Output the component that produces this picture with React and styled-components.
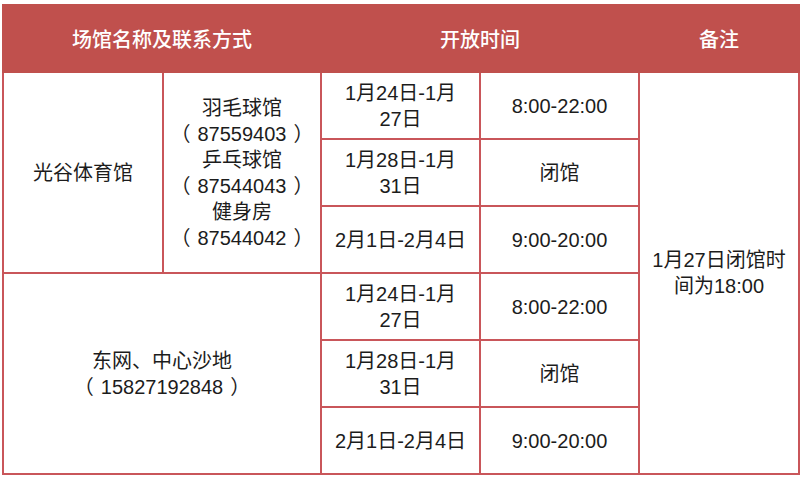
import React from "react";
import styled, { createGlobalStyle } from "styled-components";

const Global = createGlobalStyle`
  html, body {
    margin: 0;
    padding: 0;
    background: #ffffff;
  }
  body {
    font-family: "Liberation Sans", "Noto Sans CJK SC", sans-serif;
  }
`;

const Wrapper = styled.div`
  width: 800px;
  height: 480px;
  padding: 4px 2px 0 2px;
  box-sizing: border-box;
  background: #ffffff;
`;

const Table = styled.table`
  width: 796px;
  border-collapse: collapse;
  table-layout: fixed;
  border: 2px solid #c0504d;
`;

const HeadCell = styled.th`
  height: 65px;
  padding: 0;
  background: #c0504d;
  color: #ffffff;
  font-size: 20px;
  font-weight: 500;
  text-align: center;
  vertical-align: middle;
  border: 2px solid #c0504d;
`;

const Row = styled.tr`
  height: 67px;
`;

const Cell = styled.td`
  padding: 0 4px;
  border: 2px solid #c9565a;
  color: #1c1c1c;
  font-size: 20px;
  line-height: 26px;
  text-align: center;
  vertical-align: middle;
`;

// brackets sit centred in their box in the original font, so give them room
const Paren = styled.span`
  padding-right: ${(p) => (p.$open ? "7px" : "0")};
  padding-left: ${(p) => (p.$open ? "0" : "7px")};
`;

const Phone = ({ n }) => (
  <>
    <Paren $open>（</Paren>
    {n}
    <Paren>）</Paren>
  </>
);

const schedule = [
  { date: ["1月24日-1月", "27日"], time: "8:00-22:00" },
  { date: ["1月28日-1月", "31日"], time: "闭馆" },
  { date: ["2月1日-2月4日"], time: "9:00-20:00" },
];

const Lines = ({ lines }) =>
  lines.map((l, i) => (
    <React.Fragment key={i}>
      {i > 0 && <br />}
      {l}
    </React.Fragment>
  ));

export default function App() {
  return (
    <Wrapper>
      <Global />
      <Table>
        <colgroup>
          <col style={{ width: 160 }} />
          <col style={{ width: 158 }} />
          <col style={{ width: 159 }} />
          <col style={{ width: 159 }} />
          <col style={{ width: 160 }} />
        </colgroup>
        <thead>
          <tr>
            <HeadCell colSpan={2}>场馆名称及联系方式</HeadCell>
            <HeadCell colSpan={2}>开放时间</HeadCell>
            <HeadCell>备注</HeadCell>
          </tr>
        </thead>
        <tbody>
          {schedule.map((s, i) => (
            <Row key={"a" + i}>
              {i === 0 && (
                <>
                  <Cell rowSpan={3}>光谷体育馆</Cell>
                  <Cell rowSpan={3}>
                    <Lines
                      lines={[
                        "羽毛球馆",
                        <Phone n="87559403" />,
                        "乒乓球馆",
                        <Phone n="87544043" />,
                        "健身房",
                        <Phone n="87544042" />,
                      ]}
                    />
                  </Cell>
                </>
              )}
              <Cell>
                <Lines lines={s.date} />
              </Cell>
              <Cell>{s.time}</Cell>
              {i === 0 && (
                <Cell rowSpan={6}>
                  <Lines lines={["1月27日闭馆时", "间为18:00"]} />
                </Cell>
              )}
            </Row>
          ))}
          {schedule.map((s, i) => (
            <Row key={"b" + i}>
              {i === 0 && (
                <Cell colSpan={2} rowSpan={3}>
                  <Lines lines={["东网、中心沙地", <Phone n="15827192848" />]} />
                </Cell>
              )}
              <Cell>
                <Lines lines={s.date} />
              </Cell>
              <Cell>{s.time}</Cell>
            </Row>
          ))}
        </tbody>
      </Table>
    </Wrapper>
  );
}
